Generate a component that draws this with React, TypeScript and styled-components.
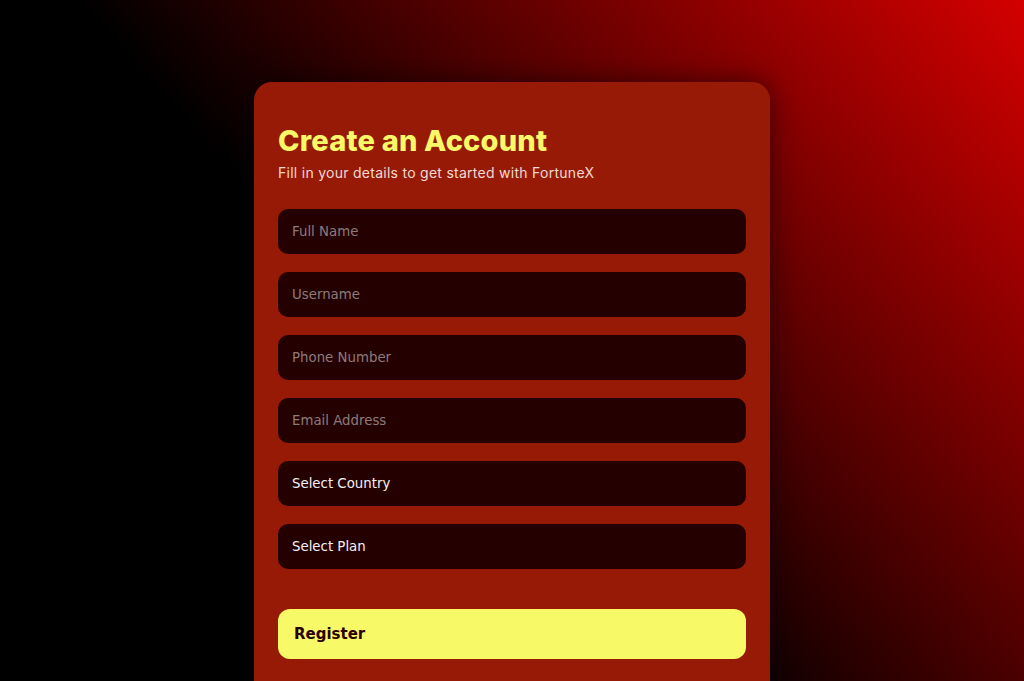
import React from 'react';
import styled, { createGlobalStyle } from 'styled-components';

const GlobalStyle = createGlobalStyle`
  html, body {
    margin: 0;
    padding: 0;
    background: #000;
  }
  * {
    box-sizing: border-box;
  }
`;

const Page = styled.div`
  min-height: 100vh;
  padding: 82px 0 40px;
  display: flex;
  justify-content: center;
  align-items: flex-start;
  background: linear-gradient(48deg, #000 42%, #d40000 100%);
  background-attachment: fixed;
`;

const Card = styled.div`
  width: 516px;
  padding: 42px 24px 40px;
  background: #971a07;
  border-radius: 18px;
  box-shadow: 0 0 28px rgba(0, 0, 0, 0.55);
`;

const Title = styled.h1`
  margin: 0;
  font-family: Inter, 'Noto Sans', sans-serif;
  font-weight: 800;
  font-size: 29px;
  line-height: 1.2;
  letter-spacing: 0.2px;
  color: #f7f966;
`;

const Subtitle = styled.p`
  margin: 4px 0 0;
  font-family: Inter, 'Noto Sans', sans-serif;
  font-size: 14px;
  line-height: 20px;
  letter-spacing: 0.27px;
  color: #f1d9d2;
`;

const Form = styled.form`
  margin-top: 26px;
  display: flex;
  flex-direction: column;
  gap: 18px;
`;

const fieldBase = `
  width: 100%;
  height: 45px;
  padding: 0 14px;
  border: none;
  outline: none;
  border-radius: 10px;
  background: #250000;
  font-family: 'DejaVu Sans', sans-serif;
  font-size: 13.33px;
`;

const Input = styled.input`
  ${fieldBase}
  color: #fff;

  &::placeholder {
    color: #8c7b7b;
  }
`;

const Select = styled.select`
  ${fieldBase}
  color: #f4f0f0;
  appearance: none;
  -webkit-appearance: none;
`;

const Button = styled.button`
  margin-top: 22px;
  width: 100%;
  height: 50px;
  padding: 0 16px;
  border: none;
  border-radius: 12px;
  background: #f7f966;
  color: #2a0000;
  text-align: left;
  font-family: 'DejaVu Sans', sans-serif;
  font-weight: 700;
  font-size: 15px;
  cursor: pointer;
`;

const fields = ['Full Name', 'Username', 'Phone Number', 'Email Address'];

export default function App() {
  return (
    <>
      <GlobalStyle />
      <Page>
        <Card>
          <Title>Create an Account</Title>
          <Subtitle>Fill in your details to get started with FortuneX</Subtitle>
          <Form onSubmit={e => e.preventDefault()}>
            {fields.map(f => (
              <Input key={f} placeholder={f} />
            ))}
            <Select defaultValue="">
              <option value="">Select Country</option>
            </Select>
            <Select defaultValue="">
              <option value="">Select Plan</option>
            </Select>
            <Button type="submit">Register</Button>
          </Form>
        </Card>
      </Page>
    </>
  );
}
